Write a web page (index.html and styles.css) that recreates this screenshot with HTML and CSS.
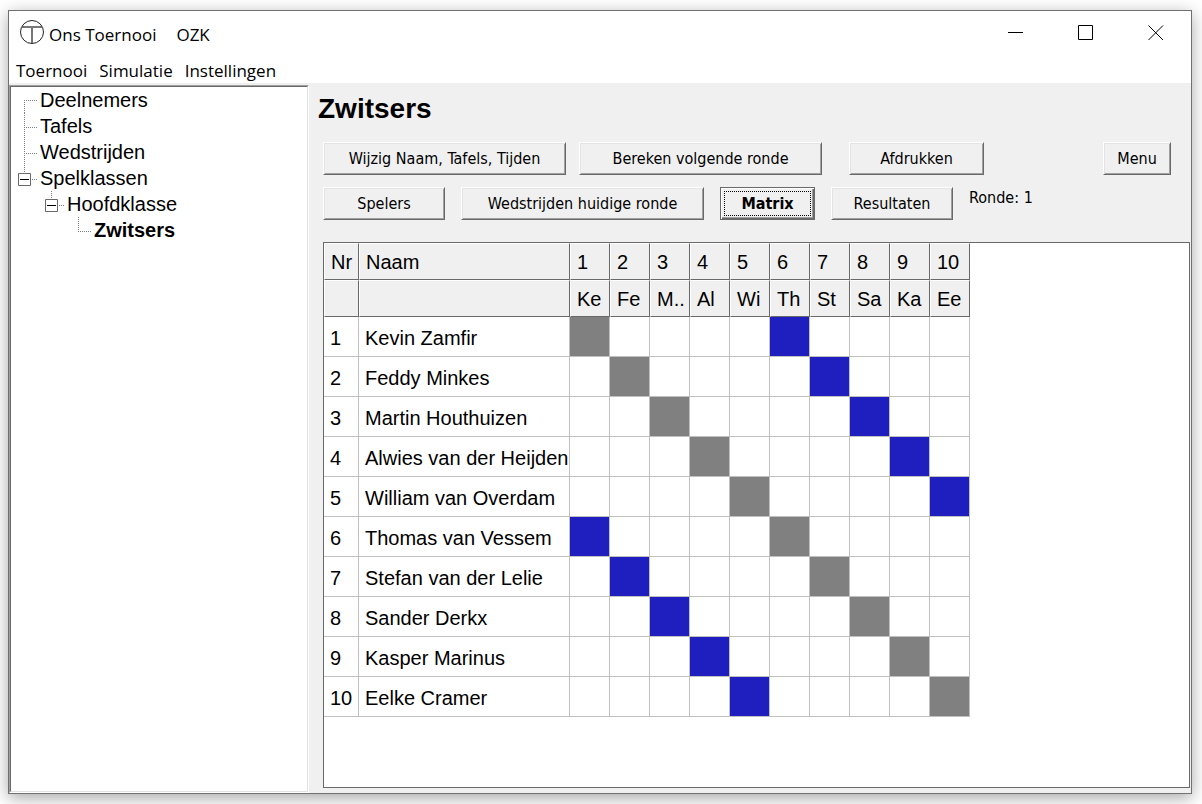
FILE: index.html
```
<!DOCTYPE html>
<html lang="nl">
<head>
  <meta charset="UTF-8">
  <title>Ons Toernooi</title>
  <link rel="stylesheet" href="styles.css">
</head>
<body>
  <div class="window">
    <header class="titlebar">
      <svg class="logo" width="24" height="24" viewBox="0 0 24 24" fill="none">
        <path d="M2 7h20M12 7v16" stroke="#777" stroke-width="2"/>
        <circle cx="12" cy="12" r="11.5" stroke="#222"/>
      </svg>
      <span class="app-name">Ons Toernooi</span>
      <span>OZK</span>
      <div class="window-buttons">
        <button aria-label="Minimaliseren">
          <svg width="16" height="16" viewBox="0 0 16 16"><path d="M0 7.500h15" stroke="#000"/></svg>
        </button>
        <button aria-label="Maximaliseren">
          <svg width="16" height="16" viewBox="0 0 16 16"><path d="M.5.5h14v14H.5z" fill="none" stroke="#000"/></svg>
        </button>
        <button aria-label="Sluiten">
          <svg width="16" height="16" viewBox="0 0 16 16"><path d="M.5.5l14.500 14.500M15 .5L.5 15" stroke="#000"/></svg>
        </button>
      </div>
    </header>

    <nav class="menubar">
      <button>Toernooi</button>
      <button>Simulatie</button>
      <button>Instellingen</button>
    </nav>

    <div class="content">
      <aside class="sidebar">
        <ul class="tree">
          <li>
            <div class="node">
              <svg class="guide" width="27" height="26"><path d="M12.500 26V14M12 13.500h13"/></svg>
              <span>Deelnemers</span>
            </div>
          </li>
          <li>
            <div class="node">
              <svg class="guide" width="27" height="26"><path d="M12.500 0v26M12 14.500h13"/></svg>
              <span>Tafels</span>
            </div>
          </li>
          <li>
            <div class="node">
              <svg class="guide" width="27" height="26"><path d="M12.500 0v26M12 14.500h13"/></svg>
              <span>Wedstrijden</span>
            </div>
          </li>
          <li>
            <div class="node">
              <button class="toggle" aria-label="Spelklassen inklappen">
                <svg class="guide" width="27" height="26">
                  <path d="M12.500 0v8M20 14.500h5"/>
                  <path class="box" d="M6.500 8.500h12v12h-12z"/>
                  <path class="minus" d="M8 14.500h9"/>
                </svg>
              </button>
              <span>Spelklassen</span>
            </div>
            <ul>
              <li>
                <div class="node">
                  <button class="toggle" aria-label="Hoofdklasse inklappen">
                    <svg class="guide" width="27" height="26">
                      <path d="M12.500 0v8M20 14.500h5"/>
                      <path class="box" d="M6.500 8.500h12v12h-12z"/>
                      <path class="minus" d="M8 14.500h9"/>
                    </svg>
                  </button>
                  <span>Hoofdklasse</span>
                </div>
                <ul>
                  <li>
                    <div class="node selected">
                      <svg class="guide" width="27" height="26"><path d="M12.500 0v14M12 14.500h13"/></svg>
                      <span>Zwitsers</span>
                    </div>
                  </li>
                </ul>
              </li>
            </ul>
          </li>
        </ul>
      </aside>

      <main class="main">
        <h1>Zwitsers</h1>
        <div class="toolbar">
          <button class="btn wide">Wijzig Naam, Tafels, Tijden</button>
          <button class="btn wide">Bereken volgende ronde</button>
          <button class="btn print">Afdrukken</button>
          <button class="btn menu">Menu</button>
        </div>
        <div class="toolbar tabs">
          <button class="btn">Spelers</button>
          <button class="btn wide">Wedstrijden huidige ronde</button>
          <button class="btn active">Matrix</button>
          <button class="btn">Resultaten</button>
          <span class="round">Ronde: 1</span>
        </div>

        <div class="grid-panel">
          <table class="matrix">
            <colgroup>
              <col class="col-nr">
              <col class="col-name">
              <col span="10" class="col-cell">
            </colgroup>
            <thead>
              <tr><th>Nr</th><th>Naam</th><th>1</th><th>2</th><th>3</th><th>4</th><th>5</th><th>6</th><th>7</th><th>8</th><th>9</th><th>10</th></tr>
              <tr><th></th><th></th><th>Ke</th><th>Fe</th><th>M..</th><th>Al</th><th>Wi</th><th>Th</th><th>St</th><th>Sa</th><th>Ka</th><th>Ee</th></tr>
            </thead>
            <tbody>
              <tr><td>1</td><td>Kevin Zamfir</td><td class="self"></td><td></td><td></td><td></td><td></td><td class="match"></td><td></td><td></td><td></td><td></td></tr>
              <tr><td>2</td><td>Feddy Minkes</td><td></td><td class="self"></td><td></td><td></td><td></td><td></td><td class="match"></td><td></td><td></td><td></td></tr>
              <tr><td>3</td><td>Martin Houthuizen</td><td></td><td></td><td class="self"></td><td></td><td></td><td></td><td></td><td class="match"></td><td></td><td></td></tr>
              <tr><td>4</td><td>Alwies van der Heijden</td><td></td><td></td><td></td><td class="self"></td><td></td><td></td><td></td><td></td><td class="match"></td><td></td></tr>
              <tr><td>5</td><td>William van Overdam</td><td></td><td></td><td></td><td></td><td class="self"></td><td></td><td></td><td></td><td></td><td class="match"></td></tr>
              <tr><td>6</td><td>Thomas van Vessem</td><td class="match"></td><td></td><td></td><td></td><td></td><td class="self"></td><td></td><td></td><td></td><td></td></tr>
              <tr><td>7</td><td>Stefan van der Lelie</td><td></td><td class="match"></td><td></td><td></td><td></td><td></td><td class="self"></td><td></td><td></td><td></td></tr>
              <tr><td>8</td><td>Sander Derkx</td><td></td><td></td><td class="match"></td><td></td><td></td><td></td><td></td><td class="self"></td><td></td><td></td></tr>
              <tr><td>9</td><td>Kasper Marinus</td><td></td><td></td><td></td><td class="match"></td><td></td><td></td><td></td><td></td><td class="self"></td><td></td></tr>
              <tr><td>10</td><td>Eelke Cramer</td><td></td><td></td><td></td><td></td><td class="match"></td><td></td><td></td><td></td><td></td><td class="self"></td></tr>
            </tbody>
          </table>
        </div>
      </main>
    </div>
  </div>
</body>
</html>
```
FILE: styles.css
```
:root {
  --face: #f0f0f0;
  --light: #e3e3e3;
  --shadow: #a0a0a0;
  --dark: #696969;
  --line: #c0c0c0;
  --self: #808080;
  --match: #1f1fbf;
}

* {
  box-sizing: border-box;
}

body {
  margin: 0;
  height: 100vh;
  padding: 10px 10px 10px 8px;
  background: #fff;
  color: #000;
  font-family: "Liberation Sans", Arial, sans-serif;
  font-size: 20px;
  overflow: hidden;
}

button {
  font: inherit;
  color: inherit;
  padding: 0;
  border: none;
  background: none;
}

.window {
  display: flex;
  flex-direction: column;
  height: 100%;
  border: 1px solid #707070;
  background: var(--face);
  box-shadow: 0 4px 16px rgba(0, 0, 0, 0.35);
}

/* title bar and menu */
.titlebar,
.menubar {
  display: flex;
  align-items: center;
  background: #fff;
  font-family: "Segoe UI", "Open Sans", sans-serif;
  font-size: 17px;
}

.titlebar {
  height: 46px;
  padding-left: 11px;
}

.logo {
  margin-right: 5px;
  margin-bottom: 4px;
}

.app-name {
  margin-right: 20px;
}

.window-buttons {
  display: flex;
  margin-left: auto;
  align-self: stretch;
}

.window-buttons button {
  width: 70px;
  display: flex;
  justify-content: center;
  padding-top: 14px;
}

.menubar {
  height: 26px;
  gap: 12px;
  padding-left: 7px;
}

.content {
  flex: 1;
  display: flex;
  min-height: 0;
}

/* tree */
.sidebar {
  width: 300px;
  margin-top: 2px;
  border: 1px solid;
  border-color: var(--shadow) #fff #fff var(--shadow);
}

.tree {
  height: 100%;
  padding-left: 1px;
  border: 1px solid;
  border-color: var(--dark) var(--light) var(--light) var(--dark);
  background: #fff;
}

ul {
  margin: 0;
  padding: 0;
  list-style: none;
}

.tree ul {
  padding-left: 27px;
}

.node {
  display: flex;
  gap: 1px;
  height: 26px;
  line-height: 26px;
}

.selected {
  font-weight: bold;
}

.guide {
  display: block;
  fill: none;
  stroke: #808080;
  stroke-dasharray: 1 1;
}

.guide .box {
  stroke: var(--dark);
  stroke-dasharray: none;
}

.guide .minus {
  stroke: #000;
  stroke-dasharray: none;
}

/* right side */
.main {
  flex: 1;
  display: flex;
  flex-direction: column;
  padding: 9px 1px 5px 14px;
}

h1 {
  margin: 0 0 16px -5px;
  font-size: 28px;
  line-height: 34px;
}

.toolbar {
  display: flex;
  gap: 13px;
  margin-bottom: 12px;
  font-family: Tahoma, "DejaVu Sans Condensed", "DejaVu Sans", sans-serif;
  font-size: 16px;
}

.tabs {
  gap: 16px;
  margin-bottom: 22px;
}

.btn {
  width: 122px;
  height: 33px;
  border: 1px solid;
  border-color: #fff var(--dark) var(--dark) #fff;
  background: var(--face);
  box-shadow: inset 1px 1px var(--light), inset -1px -1px var(--shadow);
}

.wide {
  width: 243px;
}

.print {
  width: 135px;
  margin-left: 14px;
}

.menu {
  width: 68px;
  margin-left: auto;
  margin-right: 19px;
}

.active {
  width: 95px;
  border-color: var(--dark);
  box-shadow: inset 1px 1px #fff, inset -1px -1px var(--dark), inset -2px -2px var(--shadow);
  font-weight: bold;
  outline: 1px dotted #000;
  outline-offset: -5px;
}

.round {
  line-height: 22px;
}

/* matrix */
.grid-panel {
  flex: 1;
  border: 1px solid var(--dark);
  background: #fff;
}

.matrix {
  width: 646px;
  table-layout: fixed;
  border-collapse: separate;
  border-spacing: 0;
}

.col-nr {
  width: 35px;
}

.col-name {
  width: 211px;
}

.col-cell {
  width: 40px;
}

th,
td {
  padding: 2px 0 0 6px;
  text-align: left;
  font-weight: normal;
  white-space: nowrap;
}

th {
  height: 37px;
  border: 1px solid;
  border-color: #fff var(--dark) var(--dark) #fff;
  background: var(--face);
}

td {
  height: 40px;
  padding-top: 4px;
  border-right: 1px solid var(--line);
  border-bottom: 1px solid var(--line);
}

.self {
  background: var(--self);
}

.match {
  background: var(--match);
}
```
